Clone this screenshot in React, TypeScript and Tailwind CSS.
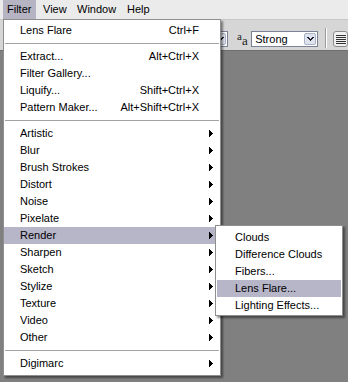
import React from "react";

type Row =
  | { kind: "sep" }
  | { kind: "item"; label: string; shortcut?: string; sub?: boolean; hl?: boolean };

const item = (label: string, opts: { shortcut?: string; sub?: boolean; hl?: boolean } = {}): Row => ({
  kind: "item",
  label,
  ...opts,
});
const sep: Row = { kind: "sep" };

const mainRows: Row[] = [
  item("Lens Flare", { shortcut: "Ctrl+F" }),
  sep,
  item("Extract...", { shortcut: "Alt+Ctrl+X" }),
  item("Filter Gallery..."),
  item("Liquify...", { shortcut: "Shift+Ctrl+X" }),
  item("Pattern Maker...", { shortcut: "Alt+Shift+Ctrl+X" }),
  sep,
  item("Artistic", { sub: true }),
  item("Blur", { sub: true }),
  item("Brush Strokes", { sub: true }),
  item("Distort", { sub: true }),
  item("Noise", { sub: true }),
  item("Pixelate", { sub: true }),
  item("Render", { sub: true, hl: true }),
  item("Sharpen", { sub: true }),
  item("Sketch", { sub: true }),
  item("Stylize", { sub: true }),
  item("Texture", { sub: true }),
  item("Video", { sub: true }),
  item("Other", { sub: true }),
  sep,
  item("Digimarc", { sub: true }),
];

const subRows = [
  { label: "Clouds" },
  { label: "Difference Clouds" },
  { label: "Fibers..." },
  { label: "Lens Flare...", hl: true },
  { label: "Lighting Effects..." },
];

function Arrow() {
  return (
    <svg width="4" height="7" viewBox="0 0 4 7" className="shrink-0" shapeRendering="crispEdges">
      <rect x="0" y="0" width="1" height="7" fill="#000" />
      <rect x="1" y="1" width="1" height="5" fill="#000" />
      <rect x="2" y="2" width="1" height="3" fill="#000" />
      <rect x="3" y="3" width="1" height="1" fill="#000" />
    </svg>
  );
}

function Chevron() {
  return (
    <svg width="7" height="5" viewBox="0 0 7 5" shapeRendering="crispEdges">
      <path d="M0 0h2v1h1v1h1V1h1V0h2v1H6v1H5v1H4v1H3V3H2V2H1V1H0z" fill="#1d1d2b" />
    </svg>
  );
}

function SelectBox({ width, text }: { width: number; text: string }) {
  return (
    <div
      className="flex h-[16px] items-stretch border border-[#7c8296] bg-white"
      style={{ width }}
    >
      <div className="flex flex-1 items-center pl-[3px] text-[11px] text-black">{text}</div>
      <div className="m-[1px] flex w-[12px] items-center justify-center rounded-[2px] border border-[#a9b2c6] bg-[#dfe3ee]">
        <Chevron />
      </div>
    </div>
  );
}

export default function App() {
  return (
    <div
      className="relative h-[382px] w-[348px] overflow-hidden bg-[#808080] text-black"
      style={{ fontFamily: '"Liberation Sans", Arial, sans-serif' }}
    >
      {/* Menu bar */}
      <div className="flex h-[19px] items-stretch bg-[#ebebeb] text-[11px]">
        <div className="ml-[3px] flex w-[33px] items-center bg-[#b6b4c2] pl-[4px]">Filter</div>
        <div className="flex w-[34px] items-center pl-[7px]">View</div>
        <div className="flex w-[50px] items-center pl-[7px]">Window</div>
        <div className="flex items-center pl-[7px]">Help</div>
      </div>

      {/* Options toolbar */}
      <div className="flex h-[31px] items-start border-t border-[#c8c8c8] bg-[#d6d6d6] pt-[11px]">
        <div className="ml-[168px]">
          <SelectBox width={60} text="" />
        </div>
        <div
          className="ml-[9px] flex h-[16px] w-[14px] items-end leading-none text-[#222]"
          style={{ fontFamily: '"Liberation Serif", "Times New Roman", serif' }}
        >
          <span className="relative top-[-5px] text-[11px]">a</span>
          <span className="text-[13px]">a</span>
        </div>
        <div className="ml-[3px]">
          <SelectBox width={67} text="Strong" />
        </div>
        <div className="ml-[7px] mt-[-3px] h-[20px] w-[2px] border-l border-r border-l-[#9a9a9a] border-r-white" />
        <div className="ml-[6px] flex h-[16px] w-[18px] items-center justify-center rounded-[3px] border border-[#8c8c8c] bg-[#f0f0f0]">
          <div className="flex flex-col gap-[1px]">
            <div className="h-[1px] w-[10px] bg-[#333]" />
            <div className="h-[1px] w-[10px] bg-[#333]" />
            <div className="h-[1px] w-[10px] bg-[#333]" />
            <div className="h-[1px] w-[10px] bg-[#333]" />
            <div className="h-[1px] w-[10px] bg-[#333]" />
          </div>
        </div>
      </div>

      {/* Canvas area */}
      <div className="h-[332px] border-t border-[#6e6e6e] bg-[#808080]" />

      {/* Filter menu */}
      <div className="absolute left-[3px] top-[19px] w-[218px] border border-[#8e8e8e] bg-white pb-[3px] pt-[2px] text-[11px] shadow-[2px_2px_2px_rgba(0,0,0,0.45)]">
        {mainRows.map((r, i) =>
          r.kind === "sep" ? (
            <div key={i} className="flex h-[9px] items-center px-[1px]">
              <div className="h-[1px] w-full bg-[#a3a3a3]" />
            </div>
          ) : (
            <div
              key={i}
              className={`flex h-[17px] items-center pl-[16px] ${r.hl ? "bg-[#b7b5c8]" : ""}`}
            >
              <span className="flex-1 whitespace-nowrap">{r.label}</span>
              {r.shortcut && <span className="mr-[21px] whitespace-nowrap">{r.shortcut}</span>}
              {r.sub && (
                <span className="mr-[7px] flex items-center">
                  <Arrow />
                </span>
              )}
            </div>
          )
        )}
      </div>

      {/* Render submenu */}
      <div className="absolute left-[215px] top-[225px] w-[128px] border border-[#8e8e8e] bg-white pb-[1px] pt-[3px] text-[11px] shadow-[2px_2px_2px_rgba(0,0,0,0.45)]">
        {subRows.map((r, i) => (
          <div
            key={i}
            className={`mx-[1px] flex h-[17px] items-center pl-[18px] whitespace-nowrap ${r.hl ? "bg-[#b7b5c8]" : ""}`}
          >
            {r.label}
          </div>
        ))}
      </div>
    </div>
  );
}
